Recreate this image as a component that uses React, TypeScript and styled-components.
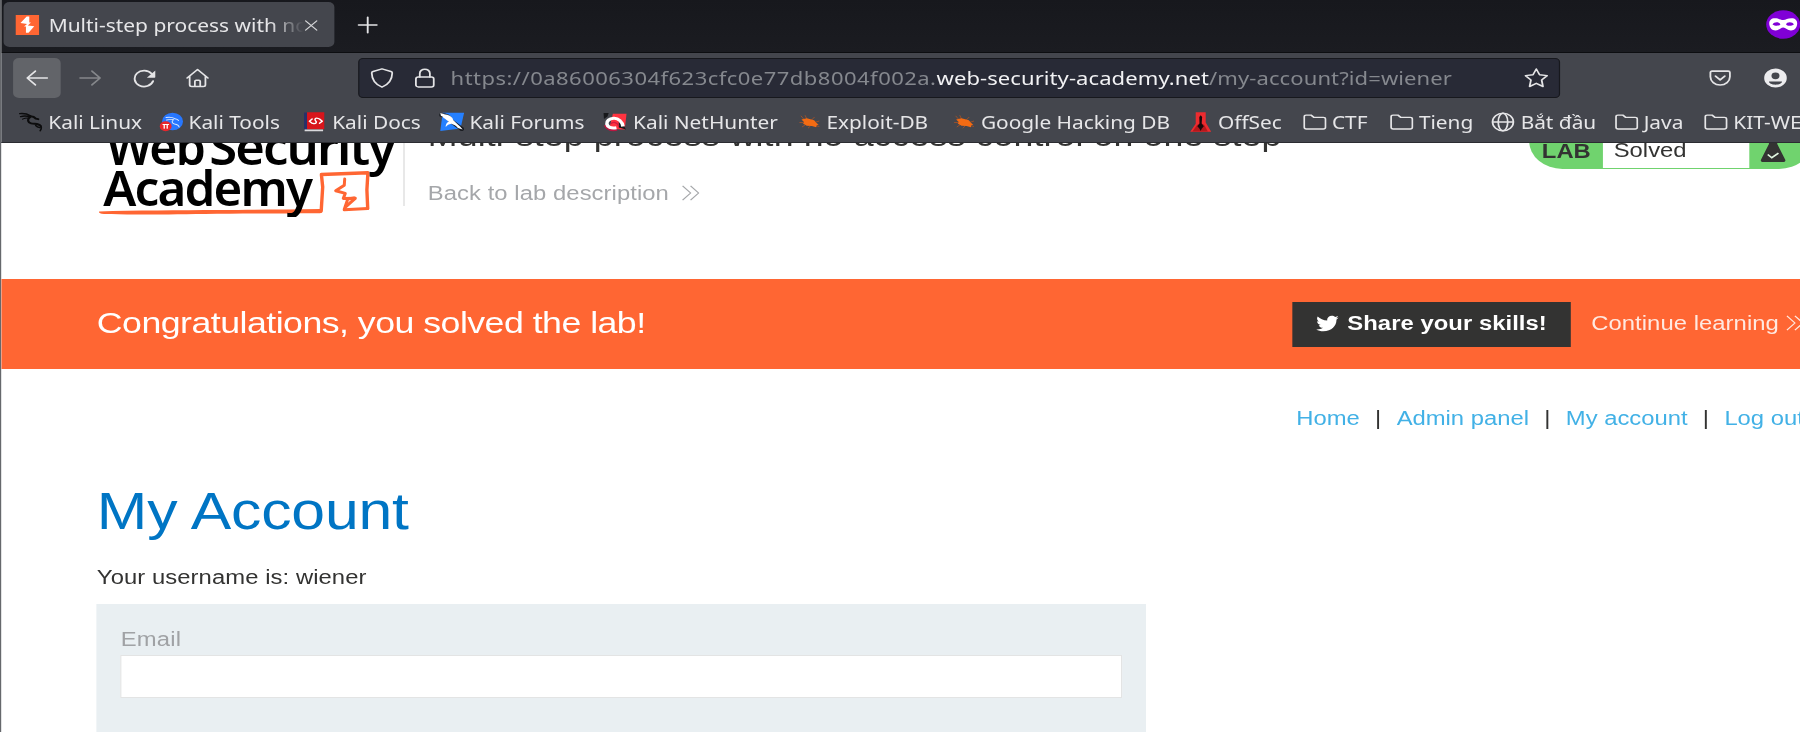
import React from 'react';
import styled, { createGlobalStyle } from 'styled-components';
import { FaTwitter } from 'react-icons/fa';

const UI = '"Noto Sans", "Open Sans", sans-serif';
const WEB = '"Liberation Sans", Arial, sans-serif';
const STRETCH = 1.19;

const GlobalStyle = createGlobalStyle`
  body { margin: 0; background: #fff; overflow: hidden; }
  * { box-sizing: border-box; }
`;

const Window = styled.div`
  width: ${1800 / STRETCH}px;
  height: 732px;
  overflow: hidden;
  transform: scaleX(${STRETCH});
  transform-origin: 0 0;
  display: flex;
  flex-direction: column;
  background: #fff;
  border-left: 1px solid #66686c;
  white-space: nowrap;
`;

const TabStrip = styled.div`
  height: 53px;
  flex: none;
  display: flex;
  align-items: center;
  padding: 0 0 3px 2.4px;
  background: linear-gradient(#17181d, #1b1c21);
  border-bottom: 1px solid #0d0e11;
`;

const Tab = styled.div`
  width: 278px;
  height: 45px;
  border-radius: 5px;
  background: #44464d;
  display: flex;
  align-items: center;
  padding: 1px 0 0 10px;
  color: #d4d5d7;
`;

const TabTitle = styled.span`
  width: 214px;
  margin: 0 -1px 0 7.5px;
  overflow: hidden;
  font: 17.6px/28px ${UI};
  color: #e6e6e8;
  mask-image: linear-gradient(to right, #000 186px, transparent 214px);
`;

const Spacer = styled.div`
  flex: 1;
`;

const Slot = styled.div<{ $w: number; $x?: number }>`
  width: ${p => p.$w}px;
  margin-left: ${p => p.$x ?? 0}px;
  flex: none;
  display: flex;
  align-items: center;
  justify-content: center;
  color: #e4e4e6;
`;

const NavBar = styled.div`
  height: 51px;
  flex: none;
  display: flex;
  align-items: center;
  padding: 0 0 1px 10px;
  background: #44464d;
  color: #e4e4e6;
`;

const NavButton = styled.div<{ $active?: boolean; $dim?: boolean }>`
  width: 40.3px;
  height: 40px;
  margin-right: 4.8px;
  border-radius: 5px;
  display: flex;
  align-items: center;
  justify-content: center;
  background: ${p => (p.$active ? '#626469' : 'transparent')};
  color: ${p => (p.$dim ? '#85878b' : '#e4e4e6')};
`;

const AddressBar = styled.div`
  width: 1010.3px;
  height: 40px;
  margin-left: 109.8px;
  border: 1px solid #17181d;
  border-radius: 4px;
  background: #282a36;
  display: flex;
  align-items: center;
  padding: 0 9.3px 0 9.3px;
`;

const Url = styled.div`
  flex: 1;
  margin-left: 11.7px;
  font: 18.5px/28px ${UI};
  color: #85888e;
`;

const UrlPrefix = styled.span`
  letter-spacing: 0.39px;
`;

const UrlHost = styled.span`
  color: #f2f2f4;
  letter-spacing: 0.07px;
`;

const UrlPath = styled.span`
  letter-spacing: 0.08px;
`;

const BookmarkBar = styled.div`
  height: 39px;
  flex: none;
  display: flex;
  align-items: center;
  padding: 0 0 3px 15px;
  background: #44464d;
  border-bottom: 1.5px solid #2b2c31;
`;

const Bookmark = styled.div<{ $w: number }>`
  width: ${p => p.$w}px;
  flex: none;
  display: flex;
  align-items: center;
  gap: 4.6px;
  font: 17.5px/26px ${UI};
  color: #e6e6e8;
`;

const Page = styled.main`
  flex: 1;
  min-height: 0;
  overflow: hidden;
  font: 20px/24px ${WEB};
  color: #333332;
`;

const LabHeader = styled.header`
  height: 166px;
  margin-top: -30px;
  display: flex;
  align-items: flex-start;
  padding-left: 79px;
`;

const LogoLink = styled.div`
  width: 259.5px;
  flex: none;
  height: 93px;
  border-right: 1px solid #d9d9d9;
`;

const LabTitle = styled.div`
  padding: 3px 0 0 20px;
  width: 850px;
  flex: none;
`;

const LabName = styled.h2`
  margin: 0 0 25px;
  font: 400 30px/40px ${WEB};
  letter-spacing: 0.1px;
`;

const BackLink = styled.div`
  display: flex;
  align-items: center;
  gap: 10.6px;
  letter-spacing: 0.06px;
  color: #a5a7aa;
`;

const StatusPill = styled.div`
  width: 238px;
  flex: none;
  height: 56px;
  margin-left: 95.2px;
  border-radius: 28px;
  background: #70d36e;
  display: flex;
  padding-bottom: 1.5px;
`;

const StatusTag = styled.strong`
  width: 62px;
  padding: 25.6px 0 0 11px;
`;

const StatusText = styled.span`
  width: 123.6px;
  padding: 24.6px 0 0 9.4px;
  background: #fff;
`;

const StatusIcon = styled.span`
  padding: 27px 0 0 8.6px;
  line-height: 0;
`;

const Banner = styled.section`
  height: 90px;
  background: #ff6633;
  color: #fff;
  display: flex;
  align-items: center;
  padding-left: 80.4px;
`;

const BannerText = styled.div`
  width: 1004.5px;
  flex: none;
  padding-bottom: 2px;
  font: 30px/36px ${WEB};
  letter-spacing: -0.44px;
`;

const ShareButton = styled.div`
  width: 234px;
  flex: none;
  height: 45px;
  background: #333332;
  display: flex;
  align-items: center;
  padding: 0 0 2px 20.3px;
  gap: 7px;
  font-weight: 700;
  letter-spacing: 0.05px;
`;

const ContinueLink = styled.div`
  margin-left: 17.3px;
  padding-bottom: 2px;
  flex: none;
  display: flex;
  align-items: center;
  gap: 6.6px;
  letter-spacing: 0.05px;
  color: #ffe9e1;
`;

const AccountNav = styled.nav`
  margin: 37px 0 0 1088.3px;
  display: flex;
  gap: 12.9px;
`;

const NavLink = styled.a`
  color: #42b1e6;
`;

const Account = styled.section`
  padding-left: 80.4px;
`;

const Heading = styled.h1`
  margin: 51.5px 0 23px;
  font: 400 51px/60px ${WEB};
  letter-spacing: -0.15px;
  color: #0075c4;
`;

const Paragraph = styled.p`
  margin: 0 0 15px;
  letter-spacing: 0.07px;
`;

const Form = styled.form`
  width: 882px;
  height: 200px;
  padding: 23px 20px;
  background: #e9eff2;
`;

const FieldLabel = styled.label`
  display: block;
  height: 28px;
  letter-spacing: 0.2px;
  color: #a0a2a5;
`;

const Field = styled.input`
  display: block;
  width: 100%;
  height: 43px;
  padding: 0 8px;
  border: 1px solid #e3e4e4;
  border-radius: 0;
  background: #fff;
  outline: none;
`;

type IconProps = { size?: number; children: React.ReactNode; sw?: number };
const Icon = ({ size = 20, children, sw = 1.15 }: IconProps) => (
  <svg width={size} height={size} viewBox="0 0 16 16" fill="none" stroke="currentColor"
    strokeWidth={sw} strokeLinecap="round" strokeLinejoin="round">{children}</svg>
);

const Burp = () => (
  <svg width="20" height="20" viewBox="0 0 20 20">
    <path fill="#ff6633" d="M0 0h20v20H0z" />
    <path fill="#fff" d="M9.400 1.500h2.200v6.100h1.400l-2.600 3 5.400.6-4.800 6.600H8.800v-6.200H7.200L9.700 9 4.200 8z" />
  </svg>
);

const Folder = () => (
  <Icon><path d="M.8 12.200V3.800c0-.8.5-1.300 1.300-1.300h3.300l1.900 1.800h6.300c.9 0 1.500.6 1.500 1.400v6.500c0 .8-.6 1.400-1.500 1.400H2.200c-.9 0-1.400-.6-1.400-1.400z" /></Icon>
);

const Globe = () => (
  <Icon><circle cx="8" cy="8" r="7" /><ellipse cx="8" cy="8" rx="3.200" ry="7" /><path d="M1 8h14" /></Icon>
);

const KaliDragon = () => (
  <svg width="20" height="20" viewBox="0 0 20 20" fill="none" stroke="#0c0c0d" strokeLinecap="round" strokeLinejoin="round">
    <path strokeWidth="1.400" d="M.6 1.600c3.400-.4 6.600.4 9 2.200M1.400 4.600c3-.9 5.600-.6 8 .4" />
    <path strokeWidth="1" d="M3 7.200c1.600-1 3.400-1.400 5.200-1.200" />
    <path strokeWidth="1.900" d="M9.500 4.200c2.200.2 3.700 1.100 4.600 2.400l2 .6M9 5.500c-2.300 1.700-1.700 5 1.100 5.800 3.200.9 6.800-.1 8.100 2.900" />
    <path strokeWidth="1.300" d="M18.300 14c.9 1.700.3 3.400-.6 4.800M14 13.500c1 1.200 2.200 1.800 3.400 2.200" />
  </svg>
);

const KaliTools = () => (
  <svg width="20" height="20" viewBox="0 0 20 20" fill="none" strokeLinecap="round">
    <circle cx="11" cy="9.500" r="8.800" fill="#2777ff" />
    <path stroke="#d6e6ff" strokeWidth=".9" d="M5.500 5.500c3-.6 5.500-.3 7.500 1.200M6 8c2.500-.8 4.500-.8 6-.3M13 6.700c1.500.3 2.500.9 3 1.800M11.500 8c-1.500 1.500-.8 3.500 1.200 4 2 .4 3.500.8 3.800 3" />
    <circle cx="5.200" cy="14.200" r="5" fill="#e8262c" />
    <path stroke="#fff" strokeWidth="1.100" d="M3 12.500h4.600M4 12.500v3.800M6.500 12.500v3.800" />
  </svg>
);

const KaliDocs = () => (
  <svg width="20" height="20" viewBox="0 0 20 20" fill="none">
    <path fill="#28306a" d="M.5.500h4v17h-4z" />
    <path fill="#d8151b" d="M3 .3h14.500v17H3z" />
    <path fill="#d9d9dc" d="M1 17.500h15.500v1.800H1z" />
    <path stroke="#fff" strokeWidth="1.300" strokeLinecap="round" strokeLinejoin="round" d="M7.300 7L5 9.200l2.300 2M13.500 7l2.300 2.200-2.300 2M12.500 6.500c-2.500-1.200-3.500 1-2.200 2.500 1.200 1.200.3 3-2 2.500" />
  </svg>
);

const KaliForums = () => (
  <svg width="21" height="20" viewBox="0 0 21 20" fill="none">
    <path fill="#2580ff" d="M3 .8h18l-3 15.700L1 19z" />
    <path stroke="#1b1d22" strokeWidth="4" strokeLinecap="round" d="M2 3c4 0 7 2 7.500 5.500 3 3 6.500 5.500 9.500 8.500" />
    <path fill="#fff" d="M1 1c2 .5 3 1.200 4.500 1.400C9 3 11.500 5 11.800 8c2 3 5.200 5 8 9.600l-4-1.600c-1.300-2-3.500-3.500-5.600-4.200C8 12 7 13.500 5.500 15c0-2.500.8-4.300 2.600-5.500C6 8.500 5.500 6.500 3.500 6 4 5 2.500 4.500 1.500 3.800z" />
  </svg>
);

const NetHunter = () => (
  <svg width="20" height="20" viewBox="0 0 20 20" fill="none">
    <path fill="#ff3340" d="M8 1.800h11.500L18 17.500 5 17z" />
    <path fill="#17181b" d="M0 1h4.500l-1 3.500L.5 7zM13 6.500c4 2.500 4.500 8 6 11l-6-2z" />
    <path stroke="#b91640" strokeWidth="2.500" d="M1.500 13c2 4.500 6 5.600 10 4.600" />
    <path stroke="#fff" strokeWidth="3" d="M16.500 14.500C16 9.500 12.600 6 8.700 6.300 4.900 6.600 2.600 9 3 12c.4 3 3.400 4.700 8 3.700" />
    <path stroke="#d01c40" strokeWidth="1.300" d="M6.500 12c1-2.500 4.500-2.500 6.500 2" />
  </svg>
);

const Spider = () => (
  <svg width="20" height="20" viewBox="0 0 20 20">
    <path stroke="#c4551b" strokeWidth=".6" fill="none" d="M6.500 8.500L3 3.800M8 7L6.500 3.200M12 8l2.500-3M14.500 10.500l4-1.500M5 10.500H1.800M7 12.500L4 15M11 14l-2 2.200M15.500 13.500l3 1" />
    <path fill="#f36b13" d="M3.500 7.500l4.500-1.200 3 1 3.200 1 1.500 2.100 2.200 2.300-1.600.3-.4 2.300-3.700-1.200-4.200-.3L4.800 11.500l.8-1.600z" />
  </svg>
);

const OffSec = () => (
  <svg width="20" height="20" viewBox="0 0 20 20">
    <path fill="#ed2b2f" d="M5.800.2h8.400v10.300l4.600 9.300H1.200l4.600-8z" />
    <path fill="#b6171b" d="M7 13l3-2 3 2 3 6.500H3z" />
    <path fill="#19090a" d="M10 3.200l1.200 1.800-.4 6.500 1.800 2.800-1.800 2.500-.8 2.200-1-2.200-1.800-2.500L9 11.500 8.800 5z" />
  </svg>
);

const PrivateMask = () => (
  <svg width="29" height="29" viewBox="0 0 29 29">
    <circle cx="14.500" cy="14.500" r="14.300" fill="#8000d7" />
    <path fill="#fff" fillRule="evenodd" d="M7.500 8.300c3.200 0 4.800 1.700 7 1.700s3.800-1.700 7-1.700c3.300 0 5 2.400 4.700 6-.3 3.700-2.200 6.200-5.200 6.200-3 0-4.300-3-6.500-3s-3.500 3-6.500 3-4.900-2.500-5.200-6.200c-.3-3.600 1.400-6 4.700-6zM9 12.300c-1.600 0-2.800.7-3.500 2.100 1 .9 2.300 1.300 3.600 1.300 1.500 0 2.600-.5 3-1.300-.3-1.200-1.500-2.100-3.100-2.100zm11 0c-1.600 0-2.800.9-3.100 2.100.4.8 1.500 1.300 3 1.300 1.300 0 2.600-.4 3.600-1.300-.7-1.400-1.900-2.100-3.500-2.100z" />
  </svg>
);

const Chevrons = () => (
  <svg width="15" height="16" viewBox="0 0 15 16" fill="none" stroke="currentColor" strokeWidth="1.100">
    <path d="M.6.800L7.300 8 .6 15.200M7.300.800L14 8l-6.700 7.200" />
  </svg>
);

const Flask = () => (
  <svg width="22" height="24" viewBox="0 0 22 24">
    <path fill="#333332" d="M7.500 0h7v4l6.700 15.700c.5 1.300-.2 2.300-1.600 2.300H2.400C1 22 .3 21 .8 19.700L7.500 4z" />
    <path fill="none" stroke="#dff5df" strokeWidth="1.500" d="M6.500 14.500l3.400 3.200 5.600-4.500" />
  </svg>
);

const AcademyLogo = () => (
  <svg width="256.300" height="104" viewBox="95 113 305 104" preserveAspectRatio="none">
    <path fill="#ff6633" d="M99 211.400c35-.9 80-1.300 120-1.400 35-.1 65-.5 101-.9l2 2.500c0 1.200-.8 1.700-2.200 1.700-35 .2-80 .2-115 .6-40 .5-78 1-101 .2-4.500-.3-5.500-1.800-4.800-2.700z" />
    <g fill="none" stroke="#ff6633" strokeLinecap="round" strokeLinejoin="round">
      <path strokeWidth="3.400" d="M321 211l1.500-24-1.300-12.500 46.500-1.700-1 17 .8 18.500" />
      <path strokeWidth="3" d="M367.500 208.500l-23.500 1.300M344 209.500l3.600-10.500 6.400-1" />
      <path strokeWidth="3" d="M344.500 179l-.4 6.200-8.600 5.600 9.600 2.600-2 5 12-.1-9.300 8.200" />
    </g>
    <g fontFamily='"Noto Sans", sans-serif' fontWeight="600" fontSize="48.500" letterSpacing="-1.800" fill="#000">
      <text x="106" y="164.800" textLength="98" lengthAdjust="spacingAndGlyphs">Web</text>
      <text x="209" y="164.800" textLength="185" lengthAdjust="spacingAndGlyphs">Security</text>
      <text x="103" y="206" textLength="208" lengthAdjust="spacingAndGlyphs">Academy</text>
    </g>
  </svg>
);

const bookmarks: { label: string; w: number; icon: React.ReactNode }[] = [
  { label: 'Kali Linux', w: 117.8, icon: <KaliDragon /> },
  { label: 'Kali Tools', w: 120.8, icon: <KaliTools /> },
  { label: 'Kali Docs', w: 114.3, icon: <KaliDocs /> },
  { label: 'Kali Forums', w: 138.5, icon: <KaliForums /> },
  { label: 'Kali NetHunter', w: 162.5, icon: <NetHunter /> },
  { label: 'Exploit-DB', w: 129.8, icon: <Spider /> },
  { label: 'Google Hacking DB', w: 199.2, icon: <Spider /> },
  { label: 'OffSec', w: 95.8, icon: <OffSec /> },
  { label: 'CTF', w: 73.1, icon: <Folder /> },
  { label: 'Tieng', w: 85.5, icon: <Folder /> },
  { label: 'Bắt đầu', w: 103.4, icon: <Globe /> },
  { label: 'Java', w: 75.3, icon: <Folder /> },
  { label: 'KIT-WEB', w: 110, icon: <Folder /> },
];

export default function App() {
  return (
    <>
      <GlobalStyle />
      <Window>
        <TabStrip>
          <Tab>
            <Burp />
            <TabTitle>Multi-step process with no</TabTitle>
            <Icon size={15}><path d="M3 3l10 10M13 3L3 13" /></Icon>
          </Tab>
          <Slot $w={20} $x={18}><Icon size={18} sw={1.400}><path d="M8 1.200v13.600M1.200 8h13.600" /></Icon></Slot>
          <Spacer />
          <Slot $w={29}><PrivateMask /></Slot>
        </TabStrip>
        <NavBar>
          <NavButton $active><Icon><path d="M15 8H1.500M7 2.500L1.500 8 7 13.500" /></Icon></NavButton>
          <NavButton $dim><Icon><path d="M1 8h13.500M9 2.500L14.500 8 9 13.500" /></Icon></NavButton>
          <NavButton>
            <Icon size={19} sw={1.400}>
              <path d="M14 10.200A6.700 6.700 0 1 1 13 4" />
              <path fill="currentColor" stroke="none" d="M15.600 1.200v5.600c0 .3-.2.5-.5.5H9.600z" />
            </Icon>
          </NavButton>
          <NavButton>
            <Icon sw={1.200}>
              <path d="M1 8l7-6.800L15 8M2.700 6.600v6.700c0 .9.500 1.400 1.400 1.400h7.800c.9 0 1.400-.5 1.400-1.400V6.600" />
              <path d="M6.200 14.500v-3.800c0-.6.300-.9.900-.9h1.800c.6 0 .9.300.9.900v3.800" />
            </Icon>
          </NavButton>
          <AddressBar>
            <Icon sw={1.200}><path d="M8 .7l6 2.100c.6.200.9.600.9 1.200-.1 5.200-2 9-6.900 11.300C3.100 13 1.200 9.200 1.100 4c0-.6.3-1 .9-1.200z" /></Icon>
            <Slot $w={20} $x={15.500}>
              <Icon sw={1.200}><rect x="2" y="7.200" width="12" height="7.900" rx="1.600" /><path d="M4.600 7.200V4.300a3.400 3.400 0 0 1 6.800 0v2.900" /></Icon>
            </Slot>
            <Url>
              <UrlPrefix>https://0a86006304f623cfc0e77db8004f002a.</UrlPrefix>
              <UrlHost>web-security-academy.net</UrlHost>
              <UrlPath>/my-account?id=wiener</UrlPath>
            </Url>
            <Icon sw={1.200}><path d="M8 .8l2.200 4.600 5.100.7-3.700 3.500.9 5.200L8 12.300l-4.500 2.500.9-5.200L.7 6.100l5.100-.7z" /></Icon>
          </AddressBar>
          <Slot $w={20} $x={124.500}>
            <Icon size={19} sw={1.300}><path d="M2.300 1.800h11.400c.8 0 1.200.4 1.200 1.200v3.600a6.900 6.900 0 0 1-13.800 0V3c0-.8.400-1.200 1.200-1.200zM4.700 6L8 9.200 11.300 6" /></Icon>
          </Slot>
          <Slot $w={20} $x={26}>
            <svg width="20" height="20" viewBox="0 0 16 16">
              <path fill="#ececee" fillRule="evenodd" d="M8 .4a7.600 7.600 0 1 0 0 15.200A7.600 7.600 0 0 0 8 .4zm0 3.100a2.700 2.700 0 1 1 0 5.400 2.700 2.700 0 0 1 0-5.400zM3.600 10.700h8.800c.2 1.300-1.800 2.700-4.400 2.700s-4.600-1.400-4.400-2.700z" />
            </svg>
          </Slot>
        </NavBar>
        <BookmarkBar>
          {bookmarks.map(b => <Bookmark key={b.label} $w={b.w}>{b.icon}{b.label}</Bookmark>)}
        </BookmarkBar>
        <Page>
          <LabHeader>
            <LogoLink><AcademyLogo /></LogoLink>
            <LabTitle>
              <LabName>Multi-step process with no access control on one step</LabName>
              <BackLink>Back to lab description <Chevrons /></BackLink>
            </LabTitle>
            <StatusPill>
              <StatusTag>LAB</StatusTag>
              <StatusText>Solved</StatusText>
              <StatusIcon><Flask /></StatusIcon>
            </StatusPill>
          </LabHeader>
          <Banner>
            <BannerText>Congratulations, you solved the lab!</BannerText>
            <ShareButton><FaTwitter size={19} />Share your skills!</ShareButton>
            <ContinueLink>Continue learning <Chevrons /></ContinueLink>
          </Banner>
          <AccountNav>
            <NavLink>Home</NavLink><span>|</span>
            <NavLink>Admin panel</NavLink><span>|</span>
            <NavLink>My account</NavLink><span>|</span>
            <NavLink>Log out</NavLink>
          </AccountNav>
          <Account>
            <Heading>My Account</Heading>
            <Paragraph>Your username is: wiener</Paragraph>
            <Form>
              <FieldLabel>Email</FieldLabel>
              <Field />
            </Form>
          </Account>
        </Page>
      </Window>
    </>
  );
}
